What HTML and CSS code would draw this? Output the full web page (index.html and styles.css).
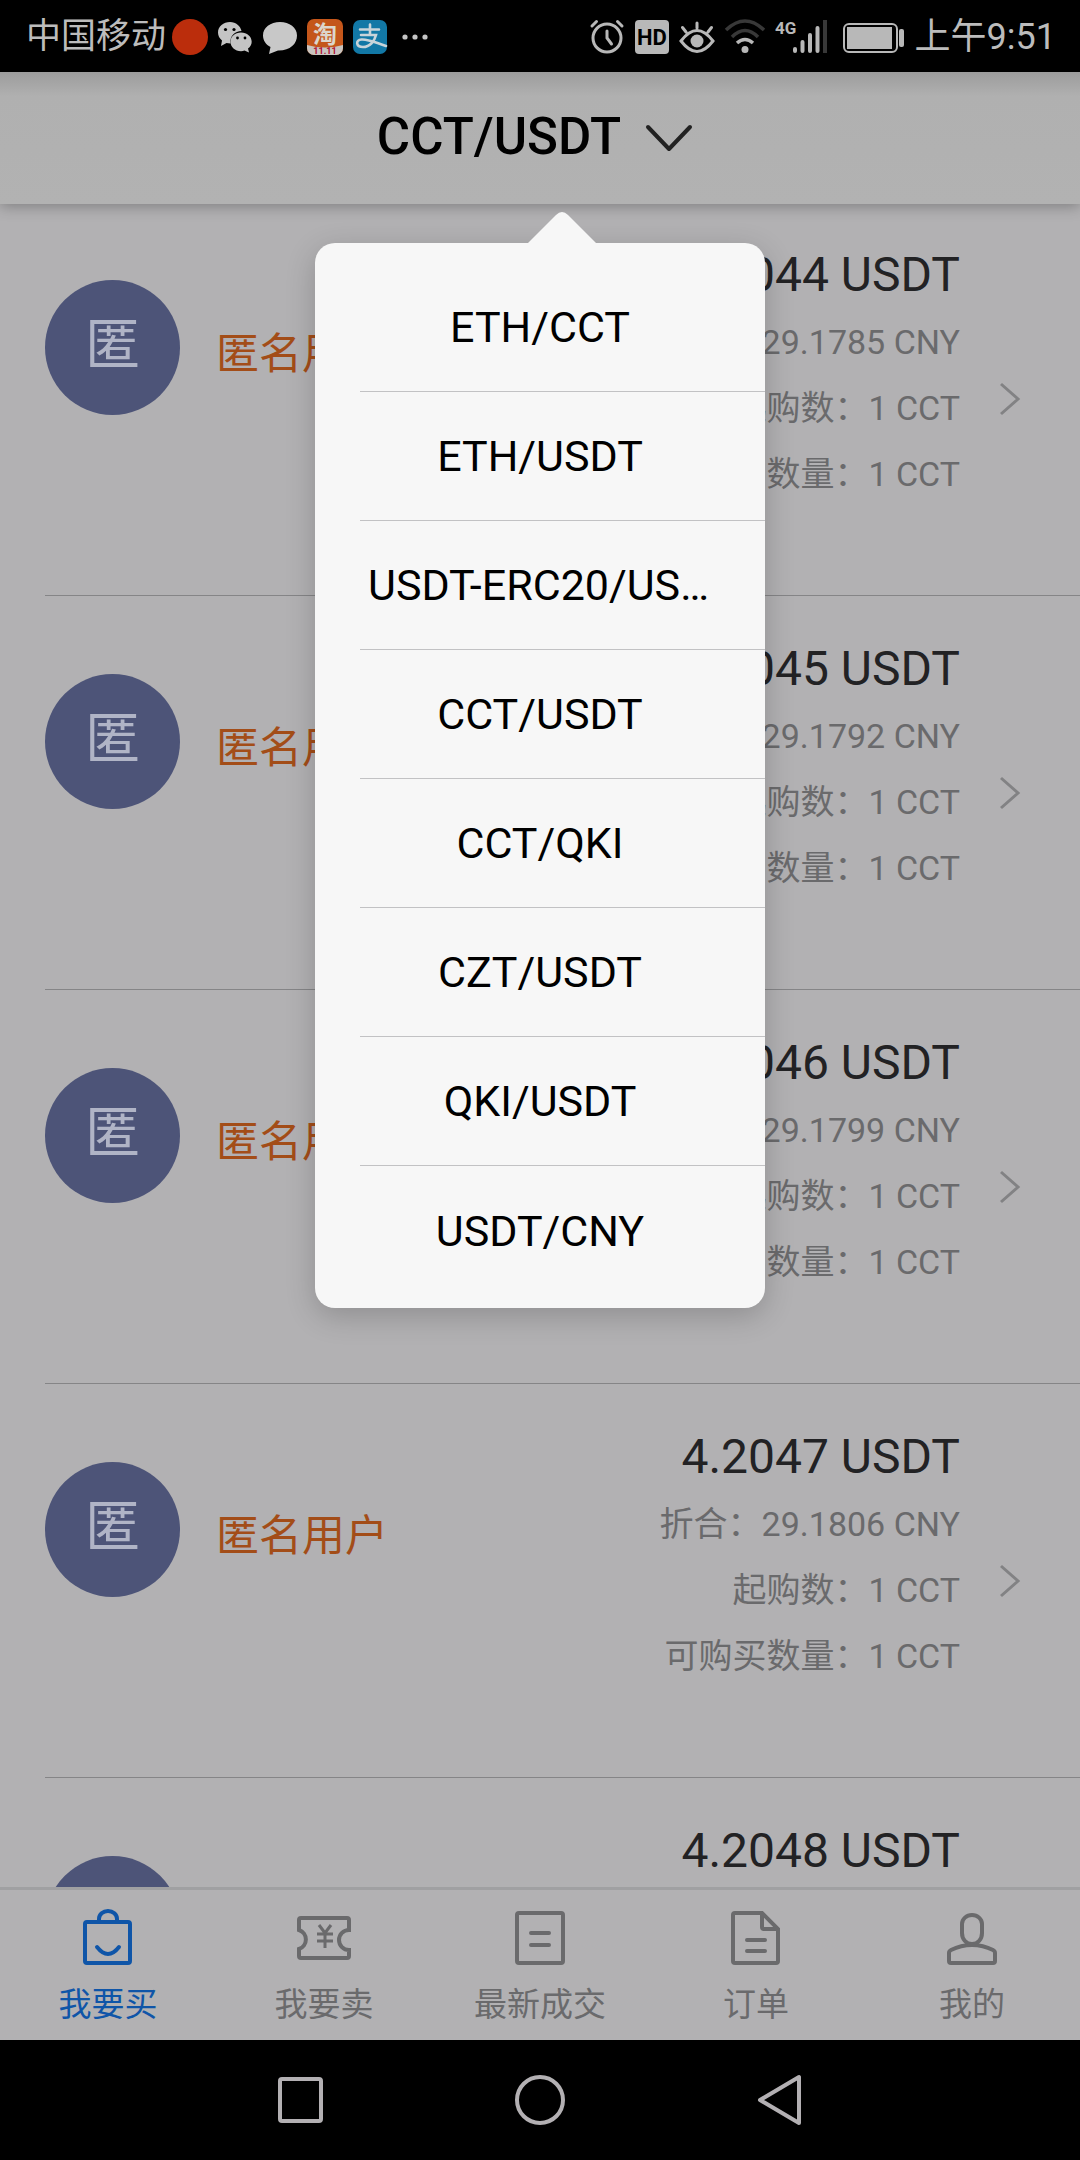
FILE: index.html
```html
<!DOCTYPE html>
<html lang="zh-CN">
<head>
    <meta charset="UTF-8">
    <meta name="viewport" content="width=device-width, initial-scale=1">
    <title>CCT/USDT</title>
    <link rel="stylesheet" href="styles.css">
</head>
<body>
    <div class="status-bar">
        <div class="status-left">
            <span class="carrier">中国移动</span>
            <svg width="36" height="36" viewBox="0 0 36 36"><circle cx="18" cy="18" r="18" fill="#bb2d0c"/></svg>
            <svg width="36" height="36" viewBox="0 0 36 36">
                <path fill="#c4c4c4" d="M13 3C6.500 3 1 7.200 1 13.500c0 3 1.500 6 4 8L4 27l5.500-3c1.200.3 2.500.5 4 .5C12.500 17 18 12 24.500 12 23.500 7 19 3 13 3z"/>
                <path fill="#c4c4c4" d="M24 13.500c-6 0-10.500 4-10.500 9.300S18 32.200 24 32.200c1.200 0 2.500-.2 3.500-.6l4.500 2-1-4c2.300-1.600 3.700-4 3.700-6.800 0-5.300-4.700-9.300-10.700-9.300z"/>
                <g fill="#000"><circle cx="8.500" cy="10.500" r="1.600"/><circle cx="17" cy="10.500" r="1.600"/><circle cx="20.500" cy="19" r="1.400"/><circle cx="28" cy="19" r="1.400"/></g>
            </svg>
            <svg width="36" height="36" viewBox="0 0 36 36"><path fill="#c8c8c8" d="M18 3C8.500 3 1 8.500 1 16.500c0 5 3 9.300 7.500 11.500l-1.500 7L16 31.500c12 .3 19-6.500 19-15C35 8.500 27.500 3 18 3z"/></svg>
            <svg width="36" height="36" viewBox="0 0 36 36">
                <rect width="36" height="36" rx="7" fill="#c4561a"/>
                <path d="M0 26q18 5 36 0v3a7 7 0 0 1-7 7H7a7 7 0 0 1-7-7z" fill="#c9c4c0"/>
                <text x="18" y="24" class="app-text">淘</text>
                <text x="18" y="35" class="sale-text">11.11</text>
            </svg>
            <svg width="36" height="36" viewBox="0 0 36 36">
                <rect x="1" y="1" width="34" height="34" rx="7" fill="#1278a6"/>
                <g fill="none" stroke="#c8d4da" stroke-width="2.600" stroke-linecap="round">
                    <path d="M8 10.500h19M18 5.500v10M9 16h15c-1.500 6-6 12-13 12-7 0-8-7-1.500-7.500C17 20 24 24 34 27"/>
                </g>
            </svg>
            <svg width="36" height="36" viewBox="0 0 36 36"><g fill="#c4c4c4"><circle cx="8" cy="18" r="2.600"/><circle cx="18" cy="18" r="2.600"/><circle cx="28" cy="18" r="2.600"/></g></svg>
        </div>
        <div class="status-right">
            <svg width="36" height="36" viewBox="0 0 36 36" fill="none" stroke="#b8b8b8" stroke-width="3" stroke-linecap="round">
                <circle cx="18" cy="19" r="14"/><path d="M18 12v7l4.500 6M3 7l4.500-4.500M33 7l-4.500-4.500"/>
            </svg>
            <svg width="36" height="36" viewBox="0 0 36 36">
                <rect x="1" y="1" width="34" height="34" rx="4" fill="#b8b8b8"/>
                <text x="18" y="26" class="hd-text">HD</text>
            </svg>
            <svg width="36" height="36" viewBox="0 0 36 36" fill="none" stroke="#b8b8b8" stroke-width="3" stroke-linecap="round">
                <path d="M2 22q16-21 32 0-16 21-32 0zM18 9V4M7 13L3.500 8.500M29 13l3.500-4.500"/><circle cx="18" cy="22" r="6.500" fill="#b8b8b8" stroke="none"/>
            </svg>
            <svg width="42" height="36" viewBox="0 0 42 36" fill="none" stroke-width="3.500">
                <path d="M2 11q19-18 38 0M8 18q13-13 26 0" stroke="#383838"/>
                <path d="M13 24q8-7 16 0" stroke="#b8b8b8"/><circle cx="21" cy="30.500" r="3.500" fill="#b8b8b8"/>
            </svg>
            <svg width="54" height="36" viewBox="0 0 54 36">
                <text x="0" y="15" class="net-text">4G</text>
                <g stroke="#b8b8b8" stroke-width="4" stroke-linecap="round"><path d="M20 30v2M27.500 23v9M35 16v16M42.500 9v23"/></g>
                <path d="M50 1v33" stroke="#383838" stroke-width="4"/>
            </svg>
            <svg width="68" height="36" viewBox="0 0 68 36">
                <rect x="6" y="5" width="53" height="28" rx="5" fill="none" stroke="#b8b8b8" stroke-width="2"/>
                <rect x="9" y="8" width="45" height="22" fill="#b8b8b8"/>
                <rect x="61" y="10" width="5" height="18" rx="2" fill="#b8b8b8"/>
            </svg>
            <span class="time">上午9:51</span>
        </div>
    </div>

    <header class="header">
        <button class="pair-toggle" type="button" aria-expanded="true">
            CCT/USDT
            <svg width="58" height="36" viewBox="0 0 58 36" fill="none" stroke="#222" stroke-width="4" stroke-linecap="round" stroke-linejoin="round"><path d="M3 9l21 22L45 9"/></svg>
        </button>
        <div class="pair-menu">
            <svg class="pair-arrow" width="70" height="32" viewBox="0 0 70 32"><path fill="#f7f7f7" d="M0 32L29 3q6-6 12 0l29 29z"/></svg>
            <button class="pair" type="button"><span>ETH/CCT</span></button>
            <button class="pair" type="button"><span>ETH/USDT</span></button>
            <button class="pair" type="button"><span>USDT-ERC20/USDT</span></button>
            <button class="pair" type="button"><span>CCT/USDT</span></button>
            <button class="pair" type="button"><span>CCT/QKI</span></button>
            <button class="pair" type="button"><span>CZT/USDT</span></button>
            <button class="pair" type="button"><span>QKI/USDT</span></button>
            <button class="pair" type="button"><span>USDT/CNY</span></button>
        </div>
    </header>

    <main class="orders">
        <a class="order" href="#">
            <span class="avatar">匿</span>
            <span class="name">匿名用户</span>
            <span class="info">
                <span class="price">4.2044 USDT</span>
                <span>折合：29.1785 CNY</span>
                <span>起购数：1 CCT</span>
                <span>可购买数量：1 CCT</span>
            </span>
            <svg class="more" width="24" height="36" viewBox="0 0 24 36"><path d="M3 3l17 15L3 33"/></svg>
        </a>
        <a class="order" href="#">
            <span class="avatar">匿</span>
            <span class="name">匿名用户</span>
            <span class="info">
                <span class="price">4.2045 USDT</span>
                <span>折合：29.1792 CNY</span>
                <span>起购数：1 CCT</span>
                <span>可购买数量：1 CCT</span>
            </span>
            <svg class="more" width="24" height="36" viewBox="0 0 24 36"><path d="M3 3l17 15L3 33"/></svg>
        </a>
        <a class="order" href="#">
            <span class="avatar">匿</span>
            <span class="name">匿名用户</span>
            <span class="info">
                <span class="price">4.2046 USDT</span>
                <span>折合：29.1799 CNY</span>
                <span>起购数：1 CCT</span>
                <span>可购买数量：1 CCT</span>
            </span>
            <svg class="more" width="24" height="36" viewBox="0 0 24 36"><path d="M3 3l17 15L3 33"/></svg>
        </a>
        <a class="order" href="#">
            <span class="avatar">匿</span>
            <span class="name">匿名用户</span>
            <span class="info">
                <span class="price">4.2047 USDT</span>
                <span>折合：29.1806 CNY</span>
                <span>起购数：1 CCT</span>
                <span>可购买数量：1 CCT</span>
            </span>
            <svg class="more" width="24" height="36" viewBox="0 0 24 36"><path d="M3 3l17 15L3 33"/></svg>
        </a>
        <a class="order" href="#">
            <span class="avatar"></span>
            <span class="info">
                <span class="price">4.2048 USDT</span>
            </span>
        </a>
    </main>

    <nav class="tabs">
        <a class="tab active" href="#">
            <svg width="60" height="60" viewBox="0 0 60 60">
                <rect x="7" y="14" width="45" height="41" rx="2"/>
                <path d="M21 13v-2a9 8 0 0 1 18 0v2"/>
                <path d="M19 39q11 14 22 0" stroke-linecap="round"/>
            </svg>
            我要买
        </a>
        <a class="tab" href="#">
            <svg width="60" height="60" viewBox="0 0 60 60">
                <path d="M5 22V12q0-2 2-2h46q2 0 2 2v10a10 10 0 0 0 0 20v6q0 2-2 2H7q-2 0-2-2v-7a10 10 0 0 0 0-19z"/>
                <path d="M25 17l6 8 6-8M31 25v15M23 26h16M23 33h16" stroke-width="3"/>
            </svg>
            我要卖
        </a>
        <a class="tab" href="#">
            <svg width="60" height="60" viewBox="0 0 60 60">
                <rect x="7" y="5" width="46" height="50" rx="2"/>
                <path d="M21 25h18M21 37h18" stroke-linecap="round"/>
            </svg>
            最新成交
        </a>
        <a class="tab" href="#">
            <svg width="60" height="60" viewBox="0 0 60 60">
                <path d="M9 5h27l16 16v32q0 2-2 2H9q-2 0-2-2V7q0-2 2-2zM36 6v13q0 2 2 2h13"/>
                <path d="M21 32h18M21 43h18" stroke-linecap="round"/>
            </svg>
            订单
        </a>
        <a class="tab" href="#">
            <svg width="60" height="60" viewBox="0 0 60 60">
                <path d="M20 16a10 9 0 0 1 20 0v9c0 6-4 11-10 11s-10-5-10-11z"/>
                <path d="M30 37c8 0 15 2 21 5q2 1 2 3v8q0 2-2 2H9q-2 0-2-2v-8q0-2 2-3c6-3 13-5 21-5z"/>
            </svg>
            我的
        </a>
    </nav>

    <div class="system-nav">
        <button type="button" aria-label="最近任务"><svg width="60" height="60" viewBox="0 0 60 60"><rect x="10" y="9" width="41" height="42" rx="2"/></svg></button>
        <button type="button" aria-label="主屏幕"><svg width="60" height="60" viewBox="0 0 60 60"><circle cx="30" cy="30" r="23"/></svg></button>
        <button type="button" aria-label="返回"><svg width="60" height="60" viewBox="0 0 60 60"><path d="M10 30L49 7v46z"/></svg></button>
    </div>
</body>
</html>
```
FILE: styles.css
```css
* {
    box-sizing: border-box;
}
body {
    margin: 0;
    height: 100vh;
    display: flex;
    flex-direction: column;
    background: #b2b1b3;
    font-family: Roboto, "Noto Sans CJK SC", sans-serif;
    font-size: 33px;
    color: #6a6a6c;
}
a {
    color: inherit;
    text-decoration: none;
}
button {
    border: none;
    background: none;
    padding: 0;
    font: inherit;
    cursor: pointer;
}
svg {
    display: block;
    flex: none;
}

/* status bar */
.status-bar {
    display: flex;
    justify-content: space-between;
    height: 72px;
    padding: 2px 24px 0 26px;
    background: #000;
    color: #bcbcbc;
    line-height: 70px;
}
.status-left, .status-right {
    display: flex;
    align-items: center;
    gap: 9px;
}
.carrier {
    font-size: 35px;
    margin-right: -3px;
}
.time {
    font-size: 36px;
}
.app-text, .sale-text, .hd-text {
    text-anchor: middle;
}
.app-text {
    font-size: 24px;
    font-weight: bold;
    fill: #dcd6cc;
}
.sale-text {
    font-size: 9px;
    font-weight: bold;
    fill: #b01030;
}
.hd-text {
    font-size: 22px;
    font-weight: bold;
    fill: #000;
}
.net-text {
    font-size: 17px;
    font-weight: bold;
    fill: #b8b8b8;
}

/* header */
.header {
    position: relative;
    z-index: 1;
    display: flex;
    justify-content: center;
    height: 132px;
    padding-bottom: 4px;
    background: linear-gradient(#9c9c9c, #b0b0b0 24px, #b2b2b2);
    box-shadow: 0 2px 14px rgba(0, 0, 0, 0.3);
}
.pair-toggle {
    display: flex;
    align-items: center;
    gap: 24px;
    font-size: 51px;
    font-weight: 500;
    color: #000;
}
.pair-menu {
    position: absolute;
    top: 171px;
    left: 50%;
    width: 450px;
    margin-left: -225px;
    padding: 20px 0 13px;
    border-radius: 20px;
    background: #f7f7f7;
    box-shadow: 0 8px 30px rgba(0, 0, 0, 0.2);
}
.pair-arrow {
    position: absolute;
    top: -31px;
    left: 212px;
}
.pair {
    display: block;
    width: 405px;
    height: 129px;
    margin-left: 45px;
    padding: 0 53px 0 8px;
    border-bottom: 1px solid #c2c2c4;
    font-size: 43px;
    color: #000;
}
.pair:last-child {
    border-bottom: none;
}
.pair span {
    display: block;
    overflow: hidden;
    text-overflow: ellipsis;
    white-space: nowrap;
}

/* order list */
.orders {
    flex: 1;
    min-height: 0;
    overflow: hidden;
    margin-top: -2px;
}
.order {
    display: flex;
    height: 394px;
    margin-left: 45px;
    padding-right: 58px;
    border-bottom: 1px solid #858587;
}
.avatar {
    width: 135px;
    height: 135px;
    margin-top: 78px;
    border-radius: 50%;
    background: #4d5478;
    color: #b0b4c6;
    font-size: 55px;
    line-height: 128px;
    text-align: center;
}
.name {
    margin: 122px 0 0 36px;
    color: #a34d18;
    font-size: 43px;
    line-height: 60px;
}
.info {
    display: flex;
    flex-direction: column;
    margin: 40px 38px 0 auto;
    text-align: right;
    font-size: 34px;
    line-height: 66px;
}
.order:last-child .info {
    margin-right: 62px;
}
.price {
    margin-bottom: 1px;
    color: #222224;
    font-size: 48px;
}
.more {
    align-self: center;
    fill: none;
    stroke: #828284;
    stroke-width: 3px;
}

/* bottom tabs */
.tabs {
    display: flex;
    border-top: 3px solid #a0a0a2;
    background: #b2b1b3;
}
.tab {
    flex: 1;
    display: flex;
    flex-direction: column;
    align-items: center;
    gap: 17px;
    padding: 18px 0 15px;
    line-height: 40px;
}
.tab svg {
    fill: none;
    stroke: #6a6a6c;
    stroke-width: 4px;
}
.active {
    color: #0f55a8;
}
.tab.active svg {
    stroke: #0f55a8;
}

.system-nav {
    display: flex;
    justify-content: center;
    align-items: center;
    gap: 180px;
    height: 120px;
    background: #000;
}
.system-nav svg {
    fill: none;
    stroke: #b3b0b3;
    stroke-width: 4px;
    stroke-linejoin: round;
}
```
